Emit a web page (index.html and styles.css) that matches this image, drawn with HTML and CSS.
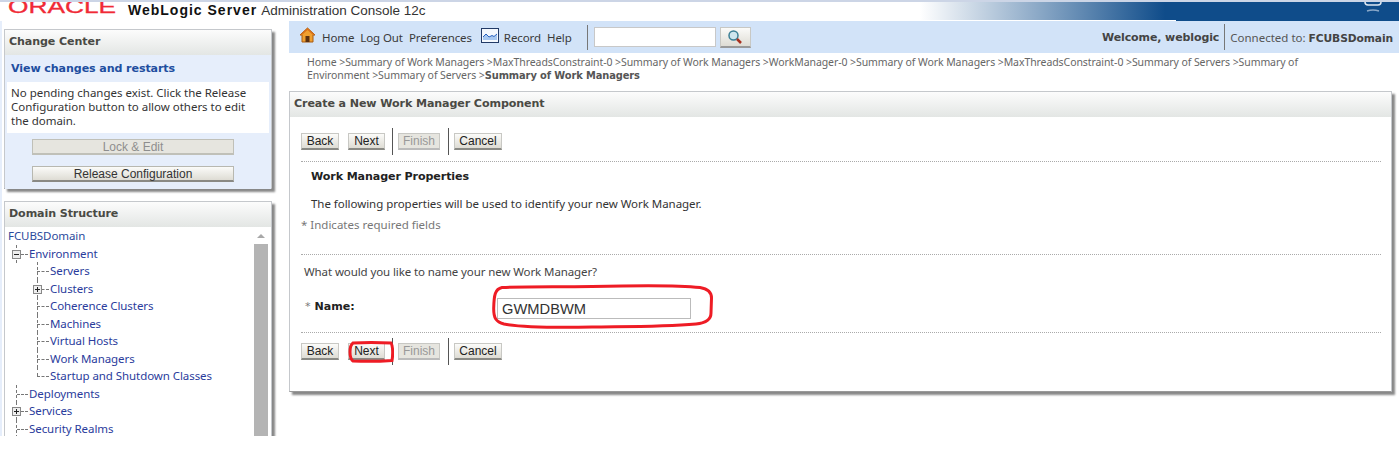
FILE: index.html
```html
<!DOCTYPE html>
<html lang="en">
<head>
<meta charset="utf-8">
<title>WebLogic Server Administration Console 12c</title>
<link rel="stylesheet" href="styles.css">
</head>
<body>
<header class="masthead">
  <span class="oracle">ORACLE</span>
  <span class="product"><b>WebLogic Server</b> Administration Console 12c</span>
  <svg class="corner-icon" width="24" height="14" viewBox="0 0 24 14"><path d="M4 0v2q0 3 3 3h10q3 0 3-3V0" fill="none" stroke="#dfe8f2" stroke-width="1.5"/><path d="M6 11q6-2 12 0" fill="none" stroke="#8aa8c8" stroke-width="1.5"/></svg>
</header>
<div class="page">
  <aside class="side">
    <section class="panel change">
      <h2 class="panel-title">Change Center</h2>
      <div class="change-body">
        <a class="view-link">View changes and restarts</a>
        <p class="change-note">No pending changes exist. Click the Release Configuration button to allow others to edit the domain.</p>
        <div class="wide-btn disabled">Lock &amp; Edit</div>
        <div class="wide-btn">Release Configuration</div>
      </div>
    </section>
    <section class="panel domain">
      <h2 class="panel-title">Domain Structure</h2>
      <div class="tree-wrap">
        <div class="tree">
          <div class="node root">FCUBSDomain</div>
          <div class="node l1 minus"><i class="box"></i>Environment</div>
          <div class="node l2">Servers</div>
          <div class="node l2 plus"><i class="box"></i>Clusters</div>
          <div class="node l2">Coherence Clusters</div>
          <div class="node l2">Machines</div>
          <div class="node l2">Virtual Hosts</div>
          <div class="node l2">Work Managers</div>
          <div class="node l2 last">Startup and Shutdown Classes</div>
          <div class="node l1">Deployments</div>
          <div class="node l1 plus"><i class="box"></i>Services</div>
          <div class="node l1">Security Realms</div>
        </div>
        <div class="scrollbar"><span class="arrow"></span><span class="thumb"></span></div>
      </div>
    </section>
  </aside>
  <main class="content">
    <nav class="toolbar">
      <svg class="home-icon" width="17" height="17" viewBox="0 0 17 17"><path d="M8.5 1 1 8h2v7h11V8h2z" fill="#f0a030" stroke="#a85a10"/><rect x="6.5" y="9" width="4" height="6" fill="#5a3010"/><path d="M8.500 1 1 8h2l5.500-5 5.500 5h2z" fill="#d9701a"/></svg>
      <a class="tool first">Home</a><a class="tool">Log Out</a><a class="tool">Preferences</a>
      <svg class="record-icon" width="18" height="15" viewBox="0 0 18 15"><rect x=".5" y=".5" width="17" height="14" fill="#f4f8fd" stroke="#223a66"/><path d="M2 9l3-3 3 3 3-1.500 2 1 3-2.500v6H2z" fill="#a8c8f0"/><path d="M2 9l3-3 3 3 3-1.500 2 1 3-2.500" fill="none" stroke="#2a62c0"/></svg>
      <a class="tool rec">Record</a><a class="tool">Help</a>
      <span class="tool-sep"></span>
      <input class="search" type="text" aria-label="Search">
      <span class="search-btn"><svg width="16" height="16" viewBox="0 0 16 16"><circle cx="6.500" cy="6.500" r="4.500" fill="#cfe6ee" stroke="#3c7f95" stroke-width="1.500"/><path d="M10 10l4 4" stroke="#a83020" stroke-width="2.500"/></svg></span>
      <span class="welcome">Welcome, weblogic</span>
      <span class="connected">Connected to: <b>FCUBSDomain</b></span>
    </nav>
    <p class="crumbs">Home &gt;Summary of Work Managers &gt;MaxThreadsConstraint-0 &gt;Summary of Work Managers &gt;WorkManager-0 &gt;Summary of Work Managers &gt;MaxThreadsConstraint-0 &gt;Summary of Servers &gt;Summary of Environment &gt;Summary of Servers &gt;<b>Summary of Work Managers</b></p>
    <section class="panel wizard">
      <h2 class="panel-title">Create a New Work Manager Component</h2>
      <div class="wizard-body">
        <div class="actions top">
          <span class="btn back">Back</span><span class="btn next">Next</span><span class="bar"></span><span class="btn finish">Finish</span><span class="bar second"></span><span class="btn cancel">Cancel</span>
        </div>
        <h3 class="sub">Work Manager Properties</h3>
        <p class="lead">The following properties will be used to identify your new Work Manager.</p>
        <p class="req">* Indicates required fields</p>
        <p class="question">What would you like to name your new Work Manager?</p>
        <div class="field">
          <label class="field-label"><span class="star">*</span> Name:</label>
          <div class="field-input">
            <input class="name-input" type="text" value="GWMDBWM" aria-label="Name">
            <svg class="ring" width="222" height="46" viewBox="0 0 222 46"><path d="M10 3.500C40 2 70 3 100 2.500 140 1.500 190 1.500 208 3.500 217 5 219.500 9 219.500 14L219 29C219 36 214 39 204 40 170 43 130 42.500 100 43 70 43.500 30 43.500 12 40 4 38 1.500 34 1.700 24 2 11 3 5 10 3.500Z" fill="none" stroke="#ee1c25" stroke-width="3"/></svg>
          </div>
        </div>
        <div class="actions bottom">
          <span class="btn back">Back</span><span class="btn next">Next<svg class="ring-next" width="46" height="22" viewBox="0 0 46 22"><path d="M5 2C16 1.500 30 1.500 43 2 45 5 45 14 44 19.500 30 20.500 16 20.500 5 20 1 17 1 5 5 2Z" fill="none" stroke="#ee1c25" stroke-width="3"/></svg></span><span class="bar"></span><span class="btn finish">Finish</span><span class="bar second"></span><span class="btn cancel">Cancel</span>
        </div>
      </div>
    </section>
  </main>
</div>
</body>
</html>
```
FILE: styles.css
```css
* { box-sizing: border-box; }
html, body { margin: 0; padding: 0; }
body {
  width: 1399px;
  height: 450px;
  overflow: hidden;
  background: #fff;
  font-family: "Noto Sans", "DejaVu Sans", sans-serif;
  font-size: 11.500px;
  color: #333;
}
h2, h3, p { margin: 0; }

.masthead {
  position: relative;
  height: 21px;
  overflow: hidden;
  display: flex;
  align-items: flex-start;
  border-top: 2px solid #ccd5e6;
  background:
    linear-gradient(#fff, #fff) 0 100% / 1176px 1px no-repeat,
    linear-gradient(90deg, #fff 0, #fff 920px, #0f4c8a 1165px, #0f4c8a 100%);
}
.oracle {
  display: block;
  width: 107px;
  margin: -5px 0 0 8px;
  font: 400 18px/20px "Liberation Sans", sans-serif;
  color: #f02a36;
  transform: scaleX(1.46);
  transform-origin: left top;
  -webkit-text-stroke: .3px #f02a36;
}
.product {
  margin: -1px 0 0 13px;
  font: 400 13.500px/18px "Liberation Sans", sans-serif;
  color: #333;
  white-space: nowrap;
}
.product b { color: #111; letter-spacing: 1px; margin-right: 1px; font-size: 14px; }
.corner-icon { position: absolute; left: 1361px; top: -2px; }

.page { display: flex; align-items: flex-start; }

.side {
  width: 289px;
  height: 415px;
  flex: none;
  padding: 8px 0 0 4px;
  overflow: hidden;
  position: relative;
}
.side::before {
  content: "";
  position: absolute;
  left: 0;
  top: 0;
  bottom: 0;
  width: 2px;
  background: #e6eefb;
}
.panel {
  background: #fff;
  border: 1px solid #c5c8cc;
  border-bottom-color: #999;
  box-shadow: 3px 3px 2px #888;
}
.panel-title {
  height: 25px;
  padding: 0 4px;
  font: 700 11.100px/24px "DejaVu Sans", sans-serif;
  letter-spacing: -.1px;
  color: #4a4a44;
  background: linear-gradient(180deg, #fcfcfc 0, #e3e6e4 100%);
}
.change { width: 268px; height: 160px; }
.change-body { height: 134px; padding-top: 5px; background: #e6eefb; }
.view-link {
  display: block;
  height: 22px;
  padding-left: 6px;
  font: 700 11.100px/18px "DejaVu Sans", sans-serif;
  letter-spacing: -.1px;
  color: #1f4ea0;
}
.change-note {
  height: 51px;
  margin: 0 2px;
  padding: 4px 4px 0;
  background: #fff;
  line-height: 14px;
  letter-spacing: -.02px;
  color: #333;
}
.wide-btn {
  width: 202px;
  height: 16px;
  margin: 6px 0 11px 27px;
  text-align: center;
  font: 400 12px/14px "Liberation Sans", sans-serif;
  color: #333;
  border: 1px solid #b8b8b0;
  border-bottom: 2px solid #8a8a85;
  background: linear-gradient(180deg, #fbfbf9, #dedcd4);
}
.wide-btn.disabled {
  color: #8e8e8e;
  background: #e6e5df;
  border-color: #c0c0b8;
}
.domain { width: 268px; margin-top: 12px; height: 300px; }
.tree-wrap { position: relative; display: flex; height: 270px; }
.tree { width: 249px; color: #2a3c9c; }
.node { position: relative; height: 17.500px; line-height: 17px; white-space: nowrap; letter-spacing: -.07px; }
.root { padding-left: 3px; color: #2b4a9c; }
.l1 { padding-left: 24px; }
.l2 { padding-left: 45px; }
.l1::before {
  content: "";
  position: absolute;
  left: 11px;
  top: 0;
  height: 18px;
  border-left: 1px dashed #777;
}
.l1::after, .l2::after {
  content: "";
  position: absolute;
  top: 9px;
  border-top: 1px dashed #777;
}
.l1::after { left: 12px; width: 11px; }
.l2::after { left: 32px; width: 12px; }
.l2::before {
  content: "";
  position: absolute;
  left: 32px;
  top: 0;
  height: 18px;
  border-left: 1px dashed #777;
}
.l2.last::before { height: 9px; }
.box {
  position: absolute;
  z-index: 1;
  width: 9px;
  height: 9px;
  top: 5px;
  border: 1px solid #888;
  background: #eee;
}
.l1 .box { left: 7px; }
.l2 .box { left: 28px; }
.box::before {
  content: "";
  position: absolute;
  left: 1px;
  right: 1px;
  top: 3px;
  height: 1px;
  background: #222;
}
.plus .box::after {
  content: "";
  position: absolute;
  left: 3px;
  top: 1px;
  bottom: 1px;
  width: 1px;
  background: #222;
}
.scrollbar { width: 14px; display: flex; flex-direction: column; align-items: center; }
.arrow {
  width: 0;
  height: 0;
  margin: 7px 0 6px;
  border: 4px solid transparent;
  border-top: 0;
  border-bottom: 4px solid #a8a8a8;
}
.thumb { width: 14px; flex: 1; background: #b4b4b4; }

.content { width: 1110px; flex: none; }
.toolbar {
  display: flex;
  align-items: center;
  height: 32px;
  padding-left: 10px;
  background: #d2e3f8;
  color: #3a3a3a;
}
.home-icon { margin-top: -4px; }
.tool { margin-left: 6px; letter-spacing: -.1px; white-space: nowrap; }
.record-icon { margin: -3px 0 0 9px; }
.tool.rec { margin-left: 5px; }
.tool-sep { width: 1px; height: 25px; margin-left: 15px; background: #777; }
.search {
  width: 122px;
  height: 20px;
  margin-left: 6px;
  padding: 0;
  border: 1px solid #c8c8c8;
  background: #fff;
}
.search-btn {
  display: flex;
  align-items: center;
  justify-content: center;
  width: 31px;
  height: 21px;
  margin-left: 4px;
  border: 1px solid #c8c8c4;
  border-bottom: 2px solid #999;
  background: linear-gradient(180deg, #fbfbf9, #dedcd4);
}
.welcome {
  margin-left: auto;
  height: 26px;
  padding-right: 5px;
  border-right: 1px solid #777;
  font: 700 11px/27px "DejaVu Sans", sans-serif;
  letter-spacing: -.1px;
  color: #444;
}
.connected {
  margin: 0 6px 0 5px;
  color: #555;
  white-space: nowrap;
}
.connected b { font: 700 10.700px "DejaVu Sans", sans-serif; letter-spacing: -.1px; color: #444; }

.crumbs {
  width: 1020px;
  height: 38px;
  padding: 3px 0 0 18px;
  font-size: 10.500px;
  line-height: 13px;
  color: #666;
  letter-spacing: -.08px;
}
.crumbs b { font: 700 9.900px/12px "DejaVu Sans", sans-serif; letter-spacing: -.1px; color: #555; }

.wizard { width: 1103px; height: 301px; }
.wizard-body { padding: 10px 11px 0; }
.actions { display: flex; align-items: center; height: 28px; font-family: "Liberation Sans", sans-serif; }
.btn {
  position: relative;
  display: block;
  height: 17px;
  text-align: center;
  font: 400 12px/14px "Liberation Sans", sans-serif;
  color: #222;
  border: 1px solid #c8c8c4;
  border-bottom: 2px solid #8a8a85;
  background: linear-gradient(180deg, #fbfbf9, #dedcd4);
}
.btn.back { width: 38px; }
.btn.next { width: 37px; margin-left: 9px; }
.btn.finish { width: 42px; margin-left: 5px; color: #999; background: #e6e5df; border-bottom-color: #bbb; }
.btn.cancel { width: 48px; margin-left: 5px; }
.bar { width: 1px; height: 27px; margin-left: 7px; background: #555; }
.bar.second { margin-left: 8px; }
.sub {
  margin: 13px 0 0 10px;
  font: 700 11.100px/18px "DejaVu Sans", sans-serif;
  letter-spacing: -.1px;
  color: #222;
}
.top { position: relative; }
.top::after, .bottom::before {
  content: "";
  position: absolute;
  left: 0;
  width: 1080px;
  border-top: 1px dotted #aaa;
}
.top::after { top: 34px; }
.bottom { position: relative; }
.bottom::before { top: -5px; }
.lead { margin: 9px 0 0 10px; line-height: 18px; letter-spacing: -.04px; color: #333; }
.req { margin-top: 3px; padding-bottom: 20px; line-height: 18px; color: #777; border-bottom: 1px dotted #aaa; width: 1080px; }
.question { margin: 8px 0 0 3px; line-height: 17px; letter-spacing: -.1px; color: #444; }
.field { display: flex; align-items: flex-start; height: 42px; margin-top: 15px; }
.field-label { width: 196px; padding: 2px 0 0 4px; font: 700 11.100px/20px "DejaVu Sans", sans-serif; color: #222; }
.star { color: #777; font-weight: 400; }
.field-input { position: relative; padding-top: 3px; }
.name-input {
  display: block;
  width: 194px;
  height: 21px;
  padding: 0 4px;
  font: 400 14.700px "Liberation Sans", sans-serif;
  color: #333;
  border: 1px solid #bbb;
  background: #fff;
}
.ring { position: absolute; left: -5px; top: -11px; }
.ring-next { position: absolute; left: -1px; top: -3px; }
```
